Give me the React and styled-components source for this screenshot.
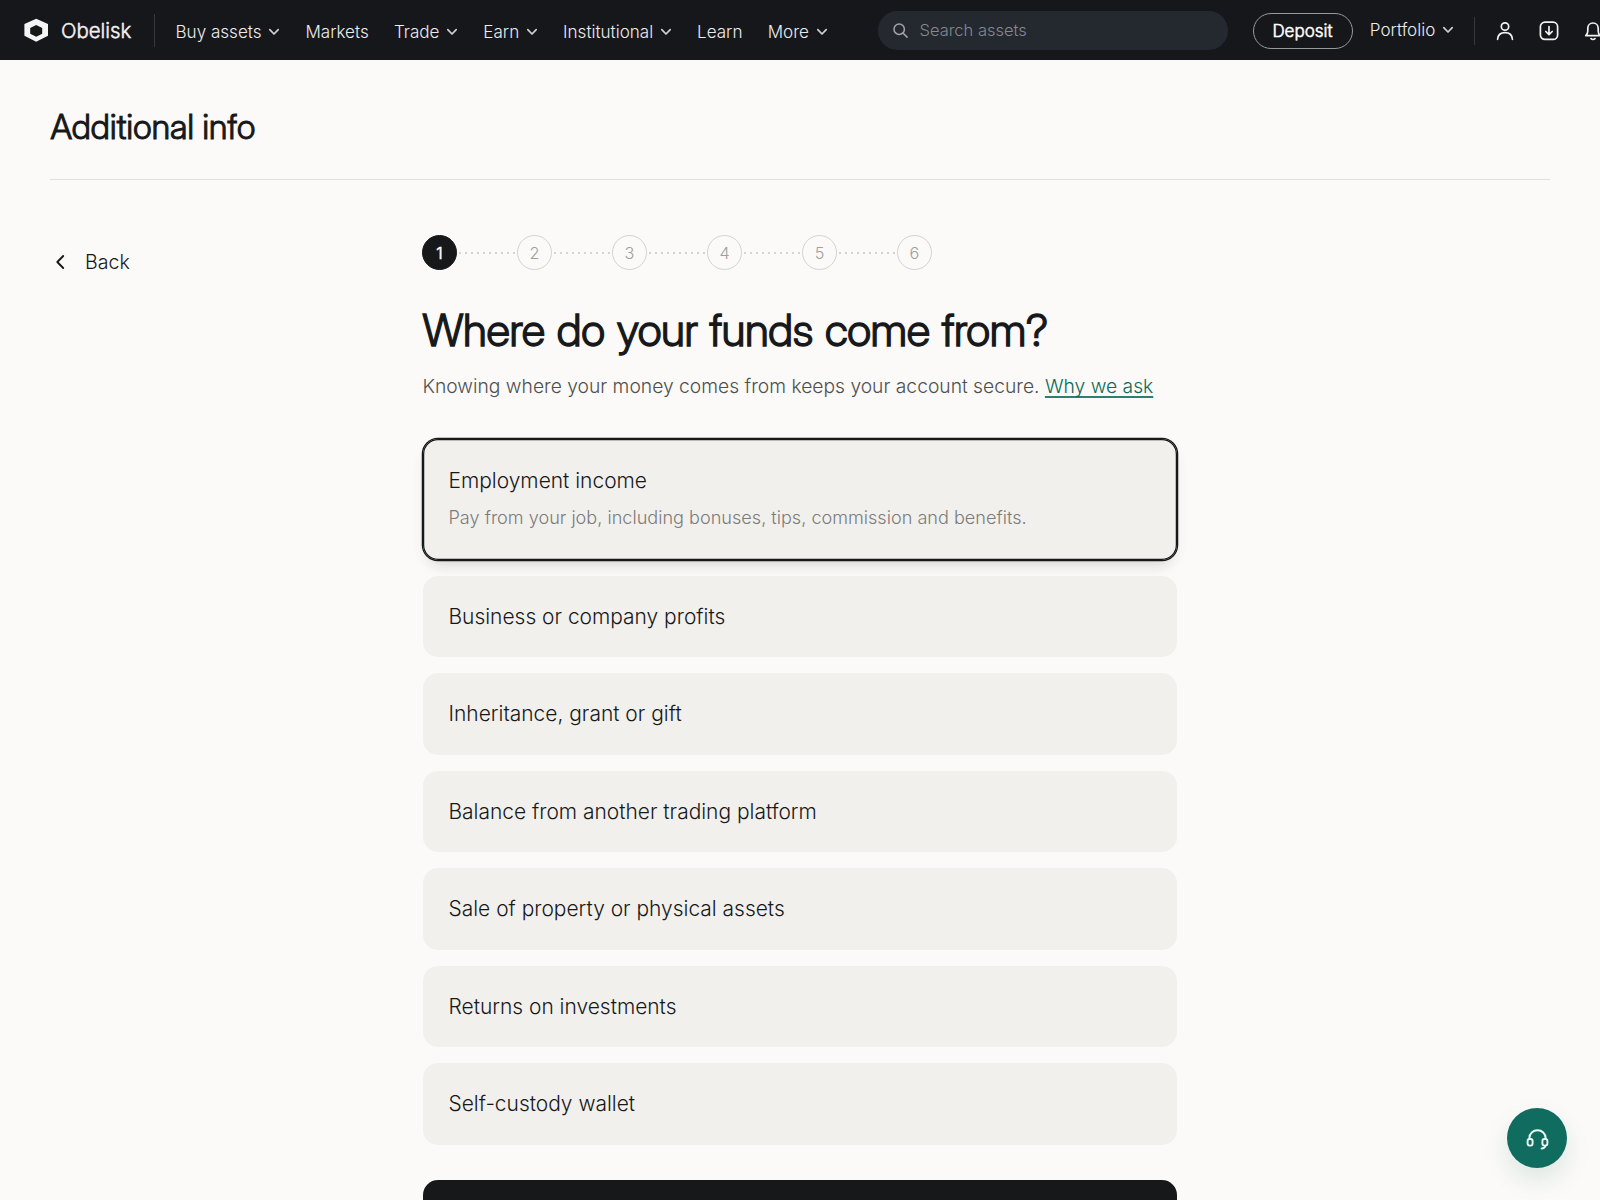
import React from "react";
import styled, { createGlobalStyle } from "styled-components";

const GlobalStyle = createGlobalStyle`
  *, *::before, *::after { box-sizing: border-box; }
  html, body { margin: 0; height: 100%; overflow: hidden; }
  body {
    background: #fbfaf8;
    color: #17181a;
    font-family: Inter, "Liberation Sans", sans-serif;
    font-weight: 300;
    -webkit-font-smoothing: antialiased;
  }
  button { font: inherit; color: inherit; border: 0; background: none; padding: 0; }
`;

const Page = styled.div`
  width: 1600px;
  height: 1200px;
  overflow: hidden;
`;

const Header = styled.header`
  display: flex;
  align-items: center;
  height: 60px;
  padding-left: 24px;
  background: #16171b;
  color: #f1f1f2;
  white-space: nowrap;
  overflow: hidden;
`;

const Brand = styled.div`
  display: flex;
  align-items: center;
  flex: none;
  gap: 13px;
  width: 130px;
  height: 60px;
  padding-top: 1px;
  font-size: 20.4px;
  -webkit-text-stroke: 0.5px;
  svg { margin-top: -1px; }
`;

const Divider = styled.span`
  flex: none;
  width: 1px;
  height: ${(p) => p.$height}px;
  background: #36383d;
`;

const Nav = styled.nav`
  display: flex;
  align-items: center;
  flex: none;
  gap: 25.2px;
  width: 722.5px;
  padding: 3px 0 0 20.5px;
`;

const NavItem = styled.a`
  display: flex;
  align-items: center;
  flex: none;
  gap: ${(p) => p.$gap || 6.7}px;
  font-size: 17.07px;
  line-height: 22px;
  color: #ececee;
`;

const Search = styled.div`
  display: flex;
  align-items: center;
  gap: 12px;
  flex: none;
  width: 350px;
  height: 38.5px;
  margin-top: 1px;
  padding: 0 0 1px 15px;
  border-radius: 19.25px;
  background: #24282f;
  color: #858990;
  font-size: 16.5px;
  svg { color: #a0a3a8; }
`;

const Deposit = styled.button`
  flex: none;
  width: 100px;
  height: 36px;
  margin: 1px 17.3px 0 25px;
  border: 1px solid #98999d;
  border-radius: 18px;
  color: #fff;
  font-size: 17px;
  -webkit-text-stroke: 0.55px;
`;

const Actions = styled.div`
  display: flex;
  align-items: center;
  flex: none;
  gap: 22px;
  margin-left: 20px;
  padding-top: 1px;
  svg { flex: none; }
  > span { margin-right: -3px; }
`;

const PageHead = styled.div`
  height: 120px;
  margin: 0 50px;
  padding-top: 46px;
  border-bottom: 1px solid #dfdfdd;
`;

const PageTitle = styled.h1`
  margin: 0 0 0 0.6px;
  font-family: "Inter Display", Inter, sans-serif;
  font-size: 33.9px;
  line-height: 42px;
  font-weight: 300;
  letter-spacing: 0.2px;
  -webkit-text-stroke: 1px;
`;

const Body = styled.div`
  display: grid;
  grid-template-columns: 372.5px 754.5px;
  padding: 55px 50px 0;
`;

const BackLink = styled.button`
  display: flex;
  align-items: center;
  gap: 17px;
  align-self: start;
  padding: 15px 0 0 2px;
  font-size: 19.6px;
  line-height: 24px;
`;

const Steps = styled.ol`
  display: flex;
  align-items: center;
  margin: 0 0 0 -0.5px;
  padding: 0;
  list-style: none;
`;

const Step = styled.li`
  display: grid;
  place-items: center;
  width: 35px;
  height: 35px;
  border-radius: 50%;
  border: 1.25px solid ${(p) => (p.$active ? "#17181a" : "#d3d3d1")};
  background: ${(p) => (p.$active ? "#17181a" : "transparent")};
  color: ${(p) => (p.$active ? "#fff" : "#9f9f9e")};
  font-size: 16.25px;
  -webkit-text-stroke: ${(p) => (p.$active ? 0.6 : 0)}px;
  padding-top: 1px;
`;

const Connector = styled.li`
  width: 60px;
  height: 2px;
  background: repeating-linear-gradient(90deg, transparent 0 2px, #d4d4d2 2px 4px, transparent 4px 6px);
`;

const Question = styled.h2`
  margin: 30px 0 0;
  font-family: "Inter Display", Inter, sans-serif;
  font-size: 44.2px;
  line-height: 60px;
  font-weight: 300;
  letter-spacing: -0.4px;
  word-spacing: 1.9px;
  -webkit-text-stroke: 1.3px;
  white-space: nowrap;
`;

const Lead = styled.p`
  margin: 11px 0 0;
  font-size: 19.25px;
  line-height: 30px;
  color: #4f5051;
  white-space: nowrap;
`;

const Link = styled.a`
  color: #0c6a58;
  text-decoration: underline;
  text-decoration-color: #2c8070;
  text-decoration-thickness: 1.5px;
  text-underline-offset: 2.5px;
  text-decoration-skip-ink: none;
`;

const Options = styled.div`
  display: flex;
  flex-direction: column;
  gap: 16px;
  margin-top: 38px;
`;

const Option = styled.div`
  position: relative;
  display: flex;
  flex-direction: column;
  justify-content: center;
  height: ${(p) => (p.$selected ? 120.5 : 81.5)}px;
  padding: ${(p) => (p.$selected ? "0 26px 1px" : "1px 26px 0")};
  border-radius: 15px;
  background: #f1f0ed;
  box-shadow: ${(p) => (p.$selected ? "0 0 0 1.25px #17181a, inset 0 0 0 1.25px #17181a, 0 10px 15px -7px rgba(40,28,40,0.18), 0 4px 24px rgba(0,0,0,0.02)" : "none")};
`;

const OptionTitle = styled.div`
  font-size: 20.95px;
  line-height: 28px;
`;

const OptionNote = styled.div`
  margin-top: 8px;
  font-size: 18.1px;
  line-height: 28px;
  color: #7c7c7b;
`;

const Continue = styled.button`
  width: 100%;
  height: 70px;
  margin-top: 35.5px;
  border-radius: 15px;
  background: #17181a;
`;

const Support = styled.button`
  position: fixed;
  left: 1507.4px;
  top: 1107.5px;
  display: grid;
  place-items: center;
  width: 60px;
  height: 60px;
  border-radius: 50%;
  background: #106c5f;
  color: #e9fbf6;
  box-shadow: 0 12px 25px rgba(20, 108, 94, 0.13);
`;

const Chevron = () => (
  <svg width="12" height="8" viewBox="0 0 12 8" fill="none" stroke="#d0d1d3" strokeWidth="1.700" strokeLinecap="round" strokeLinejoin="round">
    <path d="M1.800 1.700 6 6l4.200-4.300" />
  </svg>
);

const Logo = () => (
  <svg width="24" height="24" viewBox="0 0 24 24">
    <path fill="#f4f5f6" fillRule="evenodd" d="M12.200.7 24 6v11.800L12.200 23.700.400 17.800V6ZM12.200 7l-6 3v5.700l6 3 6-3V10Z" />
  </svg>
);

const SearchIcon = () => (
  <svg width="15" height="15" viewBox="0 0 15 15" fill="none" stroke="currentColor" strokeWidth="1.5" strokeLinecap="round">
    <circle cx="6.200" cy="6.200" r="5.200" />
    <path d="m10.200 10.200 3.900 3.900" />
  </svg>
);

const UserIcon = () => (
  <svg width="22" height="22" viewBox="0 0 22 22" fill="none" stroke="currentColor" strokeWidth="1.7" strokeLinecap="round">
    <circle cx="11" cy="6.500" r="3.700" />
    <path d="M3.600 19.300c.3-4.200 3.300-6.600 7.400-6.600s7.100 2.400 7.400 6.600" />
  </svg>
);

const DownloadIcon = () => (
  <svg width="22" height="22" viewBox="0 0 22 22" fill="none" stroke="currentColor" strokeWidth="1.7" strokeLinecap="round" strokeLinejoin="round">
    <rect x="2.400" y="2.200" width="17.200" height="17.200" rx="4.500" />
    <path d="M11 6.500v8M7.800 11.500l3.200 3.200 3.200-3.200" />
  </svg>
);

const BellIcon = () => (
  <svg width="22" height="22" viewBox="0 0 22 22" fill="none" stroke="currentColor" strokeWidth="1.7" strokeLinecap="round" strokeLinejoin="round">
    <path d="M3.800 15.700h14.400c-1.300-1.300-2-2.700-2-4.700V8.300c0-3-2.200-5.300-5.200-5.300S5.800 5.300 5.800 8.300V11c0 2-.7 3.400-2 4.700ZM9 18.600c.9 1.200 3.100 1.200 4 0" />
  </svg>
);

const BackIcon = () => (
  <svg width="16" height="16" viewBox="0 0 16 16" fill="none" stroke="#17181a" strokeWidth="1.9" strokeLinecap="round" strokeLinejoin="round">
    <path d="M11.200 2 5.300 8l5.900 6" />
  </svg>
);

const HeadsetIcon = () => (
  <svg width="25" height="24" viewBox="0 0 25 24" fill="none" stroke="currentColor" strokeWidth="1.900" strokeLinecap="round" strokeLinejoin="round">
    <path d="M4.400 13v-1.100a8.100 7.600 0 0 1 16.200 0V13" />
    <rect x="2.600" y="13" width="5" height="6.600" rx="2" />
    <rect x="17.400" y="13" width="5" height="6.600" rx="2" />
    <path d="M20.400 19.800c-.4 1.800-1.700 2.700-3.800 2.700" />
  </svg>
);

const navItems = [
  ["Buy assets", true],
  ["Markets", false],
  ["Trade", true],
  ["Earn", true],
  ["Institutional", true],
  ["Learn", false],
  ["More", true],
];

const options = [
  "Business or company profits",
  "Inheritance, grant or gift",
  "Balance from another trading platform",
  "Sale of property or physical assets",
  "Returns on investments",
  "Self-custody wallet",
];

export default function App() {
  return (
    <Page>
      <GlobalStyle />
      <Header>
        <Brand><Logo />Obelisk</Brand>
        <Divider $height={33} />
        <Nav>
          {navItems.map(([label, menu]) => (
            <NavItem key={label}>{label}{menu && <Chevron />}</NavItem>
          ))}
        </Nav>
        <Search><SearchIcon />Search assets</Search>
        <Deposit>Deposit</Deposit>
        <NavItem $gap={7.2}>Portfolio<Chevron /></NavItem>
        <Actions>
          <Divider $height={28} />
          <UserIcon />
          <DownloadIcon />
          <BellIcon />
        </Actions>
      </Header>
      <PageHead><PageTitle>Additional info</PageTitle></PageHead>
      <Body>
        <BackLink><BackIcon />Back</BackLink>
        <main>
          <Steps>
            {[1, 2, 3, 4, 5, 6].map((n) => (
              <React.Fragment key={n}>
                {n > 1 && <Connector />}
                <Step $active={n === 1}>{n}</Step>
              </React.Fragment>
            ))}
          </Steps>
          <Question>Where do your funds come from?</Question>
          <Lead>Knowing where your money comes from keeps your account secure. <Link>Why we ask</Link></Lead>
          <Options>
            <Option $selected>
              <OptionTitle>Employment income</OptionTitle>
              <OptionNote>Pay from your job, including bonuses, tips, commission and benefits.</OptionNote>
            </Option>
            {options.map((label) => (
              <Option key={label}><OptionTitle>{label}</OptionTitle></Option>
            ))}
          </Options>
          <Continue aria-label="Continue" />
        </main>
      </Body>
      <Support aria-label="Support"><HeadsetIcon /></Support>
    </Page>
  );
}
